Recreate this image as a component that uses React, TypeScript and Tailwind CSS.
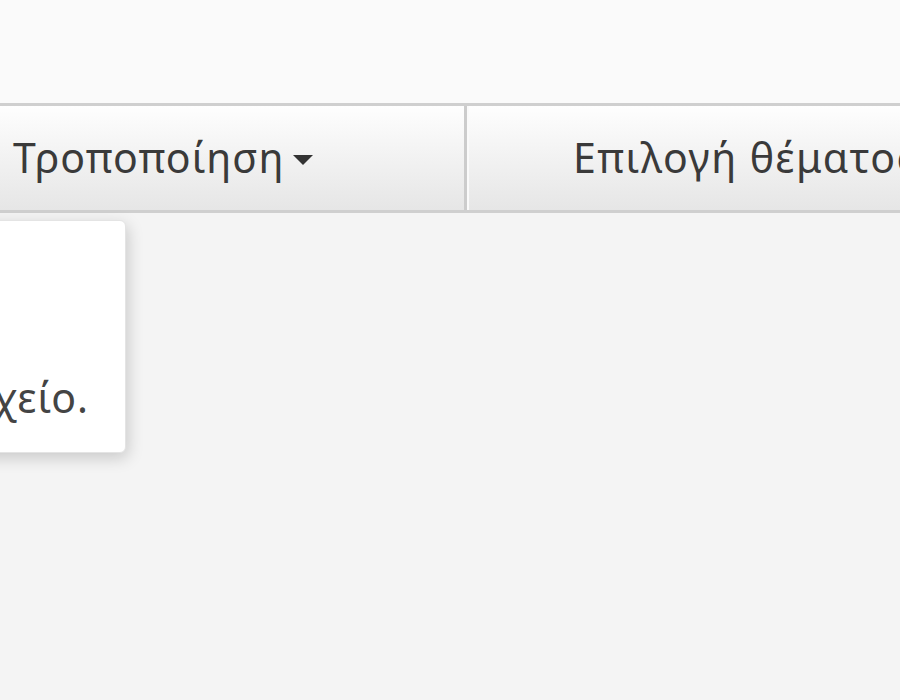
import React from 'react';

export default function App() {
  return (
    <div
      className="relative w-[900px] h-[700px] overflow-hidden bg-[#f4f4f4] text-[#3a3a3a]"
      style={{ fontFamily: '"Noto Sans", "DejaVu Sans", sans-serif' }}
    >
      <div className="h-[103px] bg-[#fafafa]" />

      {/* toolbar */}
      <div className="flex h-[110px] border-t-[3px] border-b-[3px] border-[#cfcfcf] bg-gradient-to-b from-[#fefefe] to-[#e6e6e6]">
        <button className="flex w-[464px] shrink-0 items-center pl-[13px] text-[41px] tracking-[1px] text-[#3a3a3a]">
          <span>Τροποποίηση</span>
          <span className="ml-[9px] mt-[4px] h-0 w-0 border-x-[10px] border-t-[10px] border-x-transparent border-t-[#333]" />
        </button>
        <div className="w-[3px] shrink-0 bg-[#cccccc]" />
        <div className="w-[2px] shrink-0 bg-[#fafafa]" />
        <button className="flex min-w-0 flex-1 items-center overflow-hidden whitespace-nowrap pl-[104px] text-[41px] tracking-[1.5px] text-[#3a3a3a]">
          Επιλογή θέματος
        </button>
      </div>

      {/* open dropdown menu */}
      <div className="absolute left-[-274px] top-[220px] h-[233px] w-[400px] rounded-[6px] border border-[#e4e4e4] bg-white shadow-[2px_5px_16px_rgba(0,0,0,0.18)]">
        <p className="absolute bottom-[34px] right-[36px] whitespace-nowrap text-[41px] leading-none tracking-[1px] text-[#444]">
          Δεν βρέθηκε αρχείο.
        </p>
      </div>
    </div>
  );
}
